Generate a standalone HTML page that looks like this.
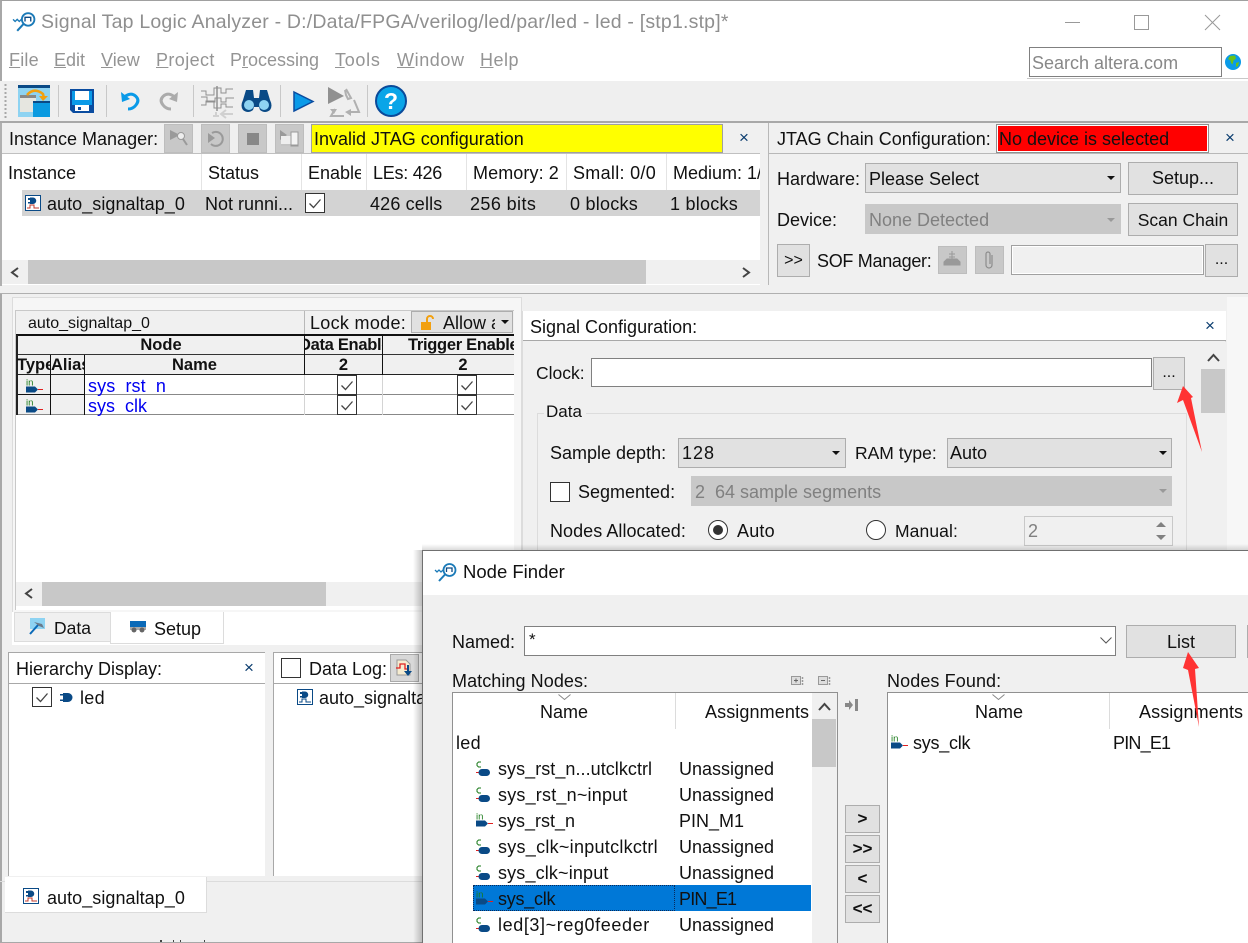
<!DOCTYPE html>
<html><head><meta charset="utf-8"><style>
html,body{margin:0;padding:0}
body{width:1248px;height:943px;overflow:hidden;position:relative;background:#f0f0f0;font:18px "Liberation Sans",sans-serif;color:#111}
.t{position:absolute;white-space:nowrap;line-height:22px;height:22px}
.b{position:absolute;box-sizing:border-box}
.btn{position:absolute;box-sizing:border-box;background:#e1e1e1;border:1px solid #adadad;text-align:center}
.cb{position:absolute;box-sizing:border-box;background:#e1e1e1;border:1px solid #adadad}
.dis{background:#c8c8c8;border-color:#c8c8c8}
.g{color:#808080}
.blu{color:#0000f0}
.bold{font-weight:bold;font-size:16.5px;text-align:center}
svg{position:absolute;overflow:visible}
.clip{overflow:hidden}
.h{color:transparent}
</style></head><body>
<svg width="0" height="0" style="position:absolute"><defs>
<symbol id="inst" viewBox="0 0 16 16"><rect x=".5" y=".5" width="15" height="15" fill="#fff" stroke="#0a4a86"/><path d="M3 3h2v-.5h3a3 3 0 0 1 0 6.500h-3v-.5h-2v-1.500h2v-2h-2z" fill="#0a4a86"/><path d="M2 13h3v-3h4v3h5" fill="none" stroke="#c0392b"/></symbol>
<symbol id="inst2" viewBox="0 0 16 16"><rect x=".5" y=".5" width="15" height="15" fill="#fff" stroke="#0a4a86"/><path d="M3 3h2v-.5h3a3 3 0 0 1 0 6.500h-3v-.5h-2v-1.500h2v-2h-2z" fill="#0a4a86"/><path d="M2 13h3v-3h4v3h5" fill="none" stroke="#0a4a86"/></symbol>
<symbol id="pin" viewBox="0 0 17 14"><text x="0" y="6.500" font-size="9.500" fill="#1a7a1a" font-family="Liberation Sans">in</text><path d="M0 7.500h9l3 3-3 3H0z" fill="#0a4a86"/><path d="M12 10.500h5" stroke="#e02020"/></symbol>
<symbol id="nod" viewBox="0 0 15 16"><path d="M5 1H2.500L1 2.500v2L2.500 6H5" fill="none" stroke="#1a7a1a"/><path d="M0 11.500h3" stroke="#e02020"/><rect x="2.500" y="8" width="11.500" height="7" rx="3.500" fill="#0a4a86"/></symbol>
<symbol id="chk" viewBox="0 0 20 20"><rect x=".5" y=".5" width="19" height="19" fill="#fff" stroke="#333"/><path d="M4.500 10.500l4 4 7-8" fill="none" stroke="#444" stroke-width="1.300"/></symbol>
<symbol id="logo" viewBox="0 0 24 22"><path d="M1 8l2 2 2-2 2 2 2-2 2 2" fill="none" stroke="#1a7ab8" stroke-width="1.300"/><circle cx="15.500" cy="8" r="6" fill="#fff" stroke="#1a7ab8" stroke-width="1.800"/><path d="M12.500 10V6h5.500v4" fill="none" stroke="#0a4a86" stroke-width="1.300"/><path d="M11 12.500L5 19" stroke="#1a7ab8" stroke-width="2"/></symbol>
</defs></svg>

<!-- main white top -->
<div class="b" style="left:0;top:0;width:1248px;height:81px;background:#fff;border-top:1px solid #a0a0a0;border-left:2px solid #a8a8a8"></div>
<svg style="left:12px;top:11px" width="25" height="23"><use href="#logo" width="25" height="23"/></svg>
<div class="t" style="left:41px;top:11px;font-size:19.5px;color:#8f8f8f;letter-spacing:.2px">Signal Tap Logic Analyzer - D:/Data/FPGA/verilog/led/par/led - led - [stp1.stp]*</div>
<div class="b" style="left:1065px;top:22px;width:15px;height:1px;background:#999"></div>
<div class="b" style="left:1134px;top:15px;width:15px;height:15px;border:1px solid #999"></div>
<svg style="left:1205px;top:15px" width="15" height="15"><path d="M0 0l15 15M15 0L0 15" stroke="#999" stroke-width="1"/></svg>
<div class="t g" style="left:9px;top:49px;color:#949494;letter-spacing:.2px"><u>F</u>ile</div>
<div class="t g" style="left:54px;top:49px;color:#949494"><u>E</u>dit</div>
<div class="t g" style="left:101px;top:49px;color:#949494"><u>V</u>iew</div>
<div class="t g" style="left:156px;top:49px;color:#949494;letter-spacing:.4px"><u>P</u>roject</div>
<div class="t g" style="left:230px;top:49px;color:#949494">P<u>r</u>ocessing</div>
<div class="t g" style="left:335px;top:49px;color:#949494;letter-spacing:.7px"><u>T</u>ools</div>
<div class="t g" style="left:397px;top:49px;color:#949494;letter-spacing:.6px"><u>W</u>indow</div>
<div class="t g" style="left:480px;top:49px;color:#949494;letter-spacing:.5px"><u>H</u>elp</div>
<div class="b" style="left:1029px;top:47px;width:193px;height:30px;border:1px solid #808080;background:#fff"></div>
<div class="t g" style="left:1032px;top:52px;font-size:18px;color:#888">Search altera.com</div>
<svg style="left:1225px;top:54px" width="16" height="16"><circle cx="8" cy="8" r="8" fill="#0a9be8"/><path d="M5 2l5-.5 1 3-2.500 2-1 4-1.500-1.500-.500-2.500L3 5zM11 9l3-1-1 4-2 1z" fill="#6ac21a"/></svg>
<div class="b" style="left:1027px;top:78px;width:221px;height:1px;background:#c8c8c8"></div>

<!-- toolbar -->
<div class="b" style="left:2px;top:81px;width:1246px;height:40px;background:#efefef"></div>
<div class="b" style="left:0;top:121px;width:1248px;height:2px;background:#a8a8a8"></div>
<svg style="left:4px;top:84px" width="4" height="34"><path d="M1.500 0v34" stroke="#a8a8a8" stroke-dasharray="2 2" stroke-width="2"/></svg>
<svg style="left:18px;top:85px" width="32" height="32" viewBox="0 0 32 32"><rect width="32" height="32" fill="#8ed3f2"/><rect width="32" height="3" fill="#0a4a86"/><rect x="2" y="10" width="16" height="17" fill="#e6e6e0"/><rect x="2" y="10" width="16" height="3" fill="#888"/><rect x="15" y="16" width="17" height="16" fill="#0a9ae0"/><rect x="15" y="16" width="17" height="2" fill="#0a4a86"/><path d="M9 10Q16 2 25 9l1 4" fill="none" stroke="#f2a010" stroke-width="2.500"/><path d="M21 11h9l-5 5z" fill="#f2a010"/></svg>
<div class="b" style="left:58px;top:85px;width:1px;height:32px;background:#c8c8c8"></div>
<svg style="left:70px;top:89px" width="24" height="24" viewBox="0 0 24 24"><path d="M0 0h24v24H3l-3-3z" fill="#0a4ca0"/><rect x="5" y="2" width="14" height="9" fill="#fff"/><rect x="2" y="2" width="3" height="14" fill="#0a9ae8"/><rect x="19" y="2" width="3" height="14" fill="#0a9ae8"/><rect x="2" y="11" width="20" height="5" fill="#0a9ae8"/><rect x="5" y="16" width="14" height="6" fill="#fff"/><rect x="8" y="18" width="3" height="3" fill="#0a4ca0"/></svg>
<div class="b" style="left:106px;top:85px;width:1px;height:32px;background:#c8c8c8"></div>
<svg style="left:120px;top:91px" width="20" height="20" viewBox="0 0 20 20"><path d="M5 5.500Q11 1 15.500 5T16 14Q13 18 8 18" fill="none" stroke="#0a9ae8" stroke-width="3"/><path d="M1 1l1 10 8-3z" fill="#0a9ae8"/></svg>
<svg style="left:159px;top:91px" width="20" height="20" viewBox="0 0 20 20"><path d="M15 5.500Q9 1 4.500 5T4 14Q7 18 12 18" fill="none" stroke="#ababab" stroke-width="3"/><path d="M19 1l-1 10-8-3z" fill="#ababab"/></svg>
<div class="b" style="left:193px;top:85px;width:1px;height:32px;background:#c8c8c8"></div>
<svg style="left:201px;top:86px" width="33" height="31" viewBox="0 0 33 31" fill="none" stroke="#909090"><path d="M0 5h5v4h8V2h7v5h5V3h7M0 11h6v5h8v-4h6v4h5v-4h8M0 19h5v-4h8v7h7v-4h5v3h7" /><path d="M16 0v25" stroke-width="1.500"/><path d="M12 30h6M15 26v5M21 28h11" stroke="#d0d0d0" stroke-width="2"/><path d="M25 24l-5 4 5 4" stroke="#d0d0d0" stroke-width="2"/></svg>
<svg style="left:241px;top:88px" width="31" height="25" viewBox="0 0 31 25"><path d="M2 12L5 2h7l1 8h5l1-8h7l3 10q3 6 0 10-5 4-10 0l-1-3h-5l-1 3q-5 4-10 0-3-4 0-10z" fill="#0a4a86"/><circle cx="8" cy="17" r="5" fill="#8ed3f2"/><circle cx="23" cy="17" r="5" fill="#8ed3f2"/></svg>
<div class="b" style="left:280px;top:85px;width:1px;height:32px;background:#c8c8c8"></div>
<svg style="left:293px;top:91px" width="21" height="21" viewBox="0 0 21 21"><path d="M1 1l19 9.500L1 20z" fill="#0a9ae8" stroke="#0a4ca0" stroke-width="1.500"/></svg>
<svg style="left:327px;top:86px" width="33" height="31" viewBox="0 0 33 31"><path d="M1 1l16 9L1 18z" fill="#909090"/><path d="M19 3l5 9-3 1-2-4-1-5M27 14l5 12H20M17 30h-13l4-7" fill="none" stroke="#b0b0b0" stroke-width="2"/><path d="M18 26l6-3v7z" fill="#b0b0b0"/><path d="M3 23h7l-3 5z" fill="#b0b0b0"/></svg>
<div class="b" style="left:367px;top:85px;width:1px;height:32px;background:#c8c8c8"></div>
<svg style="left:375px;top:85px" width="32" height="32" viewBox="0 0 32 32"><circle cx="16" cy="16" r="15" fill="#0aa5e8" stroke="#0a4a9a" stroke-width="2"/><text x="16" y="24" text-anchor="middle" font-size="23" font-weight="bold" fill="#fff" font-family="Liberation Sans">?</text></svg>

<!-- Instance manager -->
<div class="b" style="left:0;top:123px;width:2px;height:163px;background:#b0b0b0"></div>
<div class="b" style="left:2px;top:153px;width:758px;height:132px;background:#fff;border-top:1px solid #c0c0c0"></div>
<div class="t" style="left:9px;top:128px">Instance Manager:</div>
<div class="btn dis" style="left:164px;top:124px;width:29px;height:29px;background:#c8c8c8;border-color:#bdbdbd"></div>
<div class="btn dis" style="left:201px;top:124px;width:29px;height:29px;background:#c8c8c8;border-color:#bdbdbd"></div>
<div class="btn dis" style="left:238px;top:124px;width:29px;height:29px;background:#c8c8c8;border-color:#bdbdbd"></div>
<div class="btn dis" style="left:275px;top:124px;width:29px;height:29px;background:#c8c8c8;border-color:#bdbdbd"></div>
<svg style="left:169px;top:129px" width="20" height="20"><path d="M1 1l10 5-10 5z" fill="#9a9a9a"/><circle cx="12" cy="7" r="3.500" fill="#eee" stroke="#9a9a9a"/><path d="M14 10l4 6" stroke="#9a9a9a" stroke-width="2"/></svg>
<svg style="left:207px;top:130px" width="18" height="18"><path d="M5 3a7 7 0 1 1-1 11" fill="none" stroke="#9a9a9a" stroke-width="2"/><path d="M1 3l7 5-7 5z" fill="#9a9a9a"/></svg>
<div class="b" style="left:247px;top:133px;width:12px;height:12px;background:#888"></div>
<svg style="left:280px;top:130px" width="20" height="18"><path d="M0 0l7 5-7 5z" fill="#9a9a9a"/><rect x="1" y="6" width="17" height="10" fill="#eee"/><path d="M11 2h7v14h-7zM1 15h17" fill="#f4f4f4" stroke="#9a9a9a"/></svg>
<div class="b" style="left:311px;top:124px;width:412px;height:29px;background:#ffff00;border:1px solid #a0a0a0"></div>
<div class="t" style="left:314px;top:128px">Invalid JTAG configuration</div>
<div class="t" style="left:739px;top:127px;color:#0a3c6e;font-size:17px">×</div>

<div class="t" style="left:8px;top:162px">Instance</div>
<div class="b" style="left:201px;top:154px;width:1px;height:36px;background:#e4e4e4"></div>
<div class="t" style="left:208px;top:162px">Status</div>
<div class="b" style="left:301px;top:154px;width:1px;height:36px;background:#e4e4e4"></div>
<div class="t clip" style="left:308px;top:162px;width:53px">Enable</div>
<div class="b" style="left:366px;top:154px;width:1px;height:36px;background:#e4e4e4"></div>
<div class="t" style="left:373px;top:162px;letter-spacing:-.25px">LEs: 426</div>
<div class="b" style="left:466px;top:154px;width:1px;height:36px;background:#e4e4e4"></div>
<div class="t" style="left:473px;top:162px;letter-spacing:.1px">Memory: 2</div>
<div class="b" style="left:566px;top:154px;width:1px;height:36px;background:#e4e4e4"></div>
<div class="t" style="left:573px;top:162px;letter-spacing:.3px">Small: 0/0</div>
<div class="b" style="left:666px;top:154px;width:1px;height:36px;background:#e4e4e4"></div>
<div class="t clip" style="left:673px;top:162px;width:87px">Medium: 1/1</div>
<div class="b" style="left:22px;top:190px;width:738px;height:26px;background:#d3d3d3"></div>
<svg style="left:25px;top:195px" width="16" height="16"><use href="#inst" width="16" height="16"/></svg>
<div class="t" style="left:47px;top:193px;letter-spacing:.05px">auto_signaltap_0</div>
<div class="t" style="left:205px;top:193px">Not runni...</div>
<svg style="left:305px;top:193px" width="20" height="20"><use href="#chk" width="20" height="20"/></svg>
<div class="t" style="left:370px;top:193px;letter-spacing:.15px">426 cells</div>
<div class="t" style="left:470px;top:193px;letter-spacing:.4px">256 bits</div>
<div class="t" style="left:570px;top:193px;letter-spacing:.25px">0 blocks</div>
<div class="t" style="left:670px;top:193px;letter-spacing:.25px">1 blocks</div>
<div class="b" style="left:2px;top:260px;width:758px;height:24px;background:#f0f0f0"></div>
<div class="b" style="left:28px;top:260px;width:618px;height:24px;background:#c8c8c8"></div>
<svg style="left:10px;top:267px" width="10" height="11"><path d="M8 1L2 5.500 8 10" fill="none" stroke="#444" stroke-width="2"/></svg>
<svg style="left:741px;top:267px" width="10" height="11"><path d="M2 1l6 4.500L2 10" fill="none" stroke="#444" stroke-width="2"/></svg>

<!-- JTAG -->
<div class="b" style="left:768px;top:123px;width:1px;height:162px;background:#b8b8b8"></div>
<div class="b" style="left:768px;top:153px;width:480px;height:1px;background:#b8b8b8"></div>
<div class="t" style="left:777px;top:128px">JTAG Chain Configuration:</div>
<div class="b" style="left:996px;top:124px;width:213px;height:29px;background:#ff0000;border:1px solid #fff;outline:1px solid #909090;outline-offset:-1px;box-shadow:inset 0 0 0 1px #fff"></div>
<div class="t" style="left:999px;top:128px">No device is selected</div>
<div class="t" style="left:1225px;top:127px;color:#0a3c6e;font-size:17px">×</div>
<div class="t" style="left:777px;top:168px">Hardware:</div>
<div class="cb" style="left:865px;top:163px;width:256px;height:30px"></div>
<div class="t" style="left:869px;top:168px">Please Select</div>
<svg style="left:1107px;top:176px" width="9" height="5"><path d="M0 0h8L4 4z" fill="#111"/></svg>
<div class="btn" style="left:1128px;top:162px;width:110px;height:33px;line-height:31px">Setup...</div>
<div class="t" style="left:777px;top:209px">Device:</div>
<div class="cb dis" style="left:865px;top:204px;width:256px;height:30px"></div>
<div class="t" style="left:869px;top:209px;color:#808080">None Detected</div>
<svg style="left:1107px;top:218px" width="9" height="5"><path d="M0 0h8L4 4z" fill="#999"/></svg>
<div class="btn" style="left:1128px;top:203px;width:110px;height:33px;line-height:32px;font-size:17.500px">Scan Chain</div>
<div class="btn" style="left:777px;top:244px;width:33px;height:33px;line-height:32px;font-size:16px">&gt;&gt;</div>
<div class="t" style="left:817px;top:250px;letter-spacing:-.3px">SOF Manager:</div>
<div class="btn" style="left:938px;top:246px;width:29px;height:28px;background:#c8c8c8;border-color:#bdbdbd"></div>
<svg style="left:942px;top:250px" width="20" height="20"><path d="M10 1v8M7 4h6M7 7h6M2 12l3-3h10l3 3v3H2z" stroke="#999" fill="#999"/></svg>
<div class="btn" style="left:975px;top:246px;width:29px;height:28px;background:#c8c8c8;border-color:#bdbdbd"></div>
<svg style="left:983px;top:250px" width="13" height="20"><path d="M9 5v10a3 3 0 0 1-6 0V4a2 2 0 0 1 4 0v10" fill="none" stroke="#8c8c8c" stroke-width="1.200"/></svg>
<div class="b" style="left:1011px;top:245px;width:193px;height:30px;background:#f0f0f0;border:1px solid #a0a0a0;box-shadow:inset 0 0 0 1px #fff"></div>
<div class="btn" style="left:1205px;top:244px;width:33px;height:33px;line-height:30px;font-size:16px">...</div>

<!-- divider line -->
<div class="b" style="left:0;top:293px;width:1248px;height:1px;background:#b0b0b0"></div>
<div class="b" style="left:0;top:294px;width:2px;height:649px;background:#a8a8a8"></div>
<div class="b" style="left:1227px;top:297px;width:21px;height:253px;background:#f7f7f7"></div>

<!-- left node table panel -->
<div class="b" style="left:12px;top:297px;width:510px;height:316px;border:1px solid #dcdcdc;background:#f6f6f6"></div>
<div class="b" style="left:15px;top:310px;width:499px;height:300px;background:#fff;border:1px solid #c8c8c8;border-bottom:0;border-right:0"></div>
<div class="b" style="left:16px;top:311px;width:498px;height:24px;background:#f0f0f0"></div>
<div class="t" style="left:28px;top:313px;font-size:16px">auto_signaltap_0</div>
<div class="b" style="left:304px;top:311px;width:1px;height:24px;background:#b8b8b8"></div>
<div class="t" style="left:310px;top:312px;letter-spacing:.3px">Lock mode:</div>
<div class="cb" style="left:411px;top:311px;width:102px;height:22px;background:#e1e1e1"></div>
<svg style="left:420px;top:315px" width="16" height="16"><path d="M7 7V4a3 3 0 0 1 6 0" fill="none" stroke="#f2a010" stroke-width="2"/><rect x="1" y="7" width="10" height="8" fill="#f2a010"/></svg>
<div class="t clip" style="left:443px;top:312px;width:52px">Allow all</div>
<svg style="left:501px;top:320px" width="9" height="5"><path d="M0 0h8L4 4z" fill="#111"/></svg>
<!-- table -->
<div class="b" style="left:16px;top:335px;width:498px;height:40px;background:#f0f0f0"></div>
<div class="b" style="left:16px;top:334px;width:498px;height:2px;background:#111"></div>
<div class="b" style="left:16px;top:354px;width:498px;height:1px;background:#333"></div>
<div class="b" style="left:16px;top:374px;width:498px;height:1px;background:#222"></div>
<div class="b" style="left:16px;top:394px;width:498px;height:1px;background:#888"></div>
<div class="b" style="left:16px;top:414px;width:498px;height:1px;background:#888"></div>
<div class="b" style="left:16px;top:335px;width:2px;height:80px;background:#222"></div>
<div class="b" style="left:50px;top:355px;width:1px;height:60px;background:#111"></div>
<div class="b" style="left:84px;top:355px;width:1px;height:60px;background:#111"></div>
<div class="b" style="left:18px;top:375px;width:66px;height:39px;background:#f0f0f0"></div>
<div class="b" style="left:50px;top:375px;width:1px;height:39px;background:#111"></div>
<div class="b" style="left:84px;top:375px;width:1px;height:40px;background:#111"></div>
<div class="b" style="left:18px;top:394px;width:66px;height:1px;background:#111"></div>
<div class="b" style="left:304px;top:335px;width:1px;height:40px;background:#111"></div>
<div class="b" style="left:382px;top:335px;width:1px;height:40px;background:#111"></div>
<div class="b" style="left:304px;top:375px;width:1px;height:40px;background:#d4d4d4"></div>
<div class="b" style="left:382px;top:375px;width:1px;height:40px;background:#d4d4d4"></div>
<div class="t bold" style="left:18px;top:335px;width:286px;line-height:21px">Node</div>
<div class="t bold clip" style="left:305px;top:335px;width:77px;line-height:21px"><span style="position:absolute;left:-6px;white-space:nowrap;letter-spacing:-.3px">Data Enable</span></div>
<div class="t bold clip" style="left:383px;top:335px;width:131px;line-height:21px;text-align:left"><span style="position:absolute;left:25px;white-space:nowrap;letter-spacing:-.3px">Trigger Enable</span></div>
<div class="t bold clip" style="left:17px;top:355px;width:33px;line-height:21px;text-align:left">Type</div>
<div class="t bold clip" style="left:51px;top:355px;width:33px;line-height:21px;text-align:left">Alias</div>
<div class="t bold" style="left:85px;top:355px;width:219px;line-height:21px">Name</div>
<div class="t bold" style="left:305px;top:355px;width:77px;line-height:21px">2</div>
<div class="t bold" style="left:383px;top:355px;width:160px;line-height:21px">2</div>
<svg style="left:26px;top:379px" width="17" height="14"><use href="#pin" width="17" height="14"/></svg>
<svg style="left:26px;top:399px" width="17" height="14"><use href="#pin" width="17" height="14"/></svg>
<div class="t blu" style="left:88px;top:375px;letter-spacing:.1px">sys<span class="h">_</span>rst<span class="h">_</span>n</div>
<div class="t blu" style="left:88px;top:395px">sys<span class="h">_</span>clk</div>
<svg style="left:337px;top:375px" width="20" height="20"><use href="#chk" width="20" height="20"/></svg>
<svg style="left:337px;top:395px" width="20" height="20"><use href="#chk" width="20" height="20"/></svg>
<svg style="left:457px;top:375px" width="20" height="20"><use href="#chk" width="20" height="20"/></svg>
<svg style="left:457px;top:395px" width="20" height="20"><use href="#chk" width="20" height="20"/></svg>
<!-- scrollbar -->
<div class="b" style="left:16px;top:582px;width:406px;height:24px;background:#f0f0f0"></div>
<div class="b" style="left:42px;top:582px;width:284px;height:24px;background:#c8c8c8"></div>
<svg style="left:24px;top:588px" width="10" height="11"><path d="M8 1L2 5.500 8 10" fill="none" stroke="#444" stroke-width="2"/></svg>

<!-- tabs -->
<div class="b" style="left:12px;top:612px;width:410px;height:33px;background:#fff"></div>
<div class="b" style="left:14px;top:612px;width:97px;height:30px;background:#f0f0f0;border:1px solid #dcdcdc"></div>
<div class="b" style="left:110px;top:612px;width:114px;height:32px;background:#fff;border:1px solid #dcdcdc;border-top:0"></div>
<svg style="left:29px;top:618px" width="17" height="17"><rect x="1" y="0" width="15" height="11" fill="#8ed3f2"/><path d="M1 16L9 7" stroke="#0a6ab8" stroke-width="2"/><path d="M5 4l8 2 2 4-5-2z" fill="#6a7a8a"/></svg>
<div class="t" style="left:54px;top:617px;font-size:17.500px">Data</div>
<svg style="left:130px;top:621px" width="16" height="12"><rect width="16" height="6" fill="#0a6ab8"/><rect y="6" width="16" height="3" fill="#aaa"/><circle cx="4" cy="9" r="2.500" fill="#666"/><circle cx="12" cy="9" r="2.500" fill="#666"/></svg>
<div class="t" style="left:154px;top:618px;font-size:18px">Setup</div>

<!-- hierarchy -->
<div class="b" style="left:8px;top:652px;width:257px;height:224px;background:#fff;border-top:1px solid #a8a8a8;border-left:1px solid #a8a8a8"></div>
<div class="b" style="left:9px;top:683px;width:256px;height:1px;background:#a8a8a8"></div>
<div class="t" style="left:16px;top:658px">Hierarchy Display:</div>
<div class="t" style="left:244px;top:657px;color:#0a3c6e;font-size:17px">×</div>
<svg style="left:32px;top:687px" width="20" height="20"><use href="#chk" width="20" height="20"/></svg>
<svg style="left:60px;top:693px" width="12" height="9"><path d="M0 1h3v-1h5a4.500 4.500 0 0 1 0 9H3V8H0V6.500h3v-4H0z" fill="#0a4a86"/></svg>
<div class="t" style="left:80px;top:687px;letter-spacing:.3px">led</div>

<div class="b" style="left:273px;top:652px;width:149px;height:224px;background:#fff;border-top:1px solid #a8a8a8;border-left:1px solid #a8a8a8"></div>
<div class="b" style="left:274px;top:683px;width:148px;height:1px;background:#a8a8a8"></div>
<div class="b" style="left:281px;top:658px;width:20px;height:20px;background:#fff;border:1px solid #333"></div>
<div class="t" style="left:309px;top:658px">Data Log:</div>
<div class="btn" style="left:390px;top:654px;width:29px;height:28px;background:#d8d8d8;border-color:#aaa"></div>
<svg style="left:396px;top:659px" width="17" height="18"><path d="M1 1h9l4 4v11H1z" fill="#f6ecd0" stroke="#999"/><path d="M0 9h4V5h5v5h4" fill="none" stroke="#e02020" stroke-width="1.300"/><path d="M11 6h2v6h3l-4 5-4-5h3z" fill="#0a4a86"/></svg>
<svg style="left:297px;top:689px" width="16" height="16"><use href="#inst2" width="16" height="16"/></svg>
<div class="t clip" style="left:319px;top:687px;width:103px">auto_signaltap_0</div>

<!-- bottom tab -->
<div class="b" style="left:0;top:881px;width:422px;height:1px;background:#dcdcdc"></div>
<div class="b" style="left:5px;top:877px;width:202px;height:36px;background:#fff;border-right:1px solid #dcdcdc;border-bottom:1px solid #dcdcdc"></div>
<svg style="left:23px;top:888px" width="16" height="16"><use href="#inst" width="16" height="16"/></svg>
<div class="t" style="left:47px;top:887px;letter-spacing:.05px">auto_signaltap_0</div>
<div class="b" style="left:0;top:942px;width:422px;height:1px;background:#a8a8a8"></div>
<div class="b" style="left:160px;top:940px;width:2px;height:2px;background:#444"></div>
<div class="b" style="left:173px;top:940px;width:1px;height:2px;background:#444"></div>
<div class="b" style="left:180px;top:940px;width:1px;height:2px;background:#444"></div>
<div class="b" style="left:204px;top:940px;width:1px;height:2px;background:#444"></div>

<!-- signal config -->
<div class="b" style="left:522px;top:311px;width:704px;height:239px;background:#f0f0f0;border:1px solid #dcdcdc;border-bottom:0"></div>
<div class="b" style="left:523px;top:311px;width:703px;height:30px;background:#fff;border-bottom:1px solid #a8a8a8"></div>
<div class="t" style="left:530px;top:316px;font-size:18px">Signal Configuration:</div>
<div class="t" style="left:1205px;top:315px;color:#0a3c6e;font-size:17px">×</div>
<div class="t" style="left:536px;top:362px;font-size:17.500px">Clock:</div>
<div class="b" style="left:591px;top:358px;width:561px;height:29px;background:#fff;border:1px solid #808080"></div>
<div class="btn" style="left:1153px;top:357px;width:32px;height:33px;line-height:30px;font-size:16px">...</div>
<div class="b" style="left:537px;top:413px;width:650px;height:140px;border:1px solid #dcdcdc"></div>
<div class="b" style="left:544px;top:404px;width:42px;height:20px;background:#f0f0f0"></div>
<div class="t" style="left:546px;top:401px;font-size:17px">Data</div>
<div class="b" style="left:1201px;top:342px;width:25px;height:208px;background:#f0f0f0"></div>
<div class="b" style="left:1201px;top:369px;width:24px;height:44px;background:#c8c8c8"></div>
<svg style="left:1207px;top:353px" width="13" height="9"><path d="M1 8l5.500-6L12 8" fill="none" stroke="#444" stroke-width="2"/></svg>
<div class="t" style="left:550px;top:442px;font-size:18px">Sample depth:</div>
<div class="cb" style="left:678px;top:438px;width:168px;height:30px"></div>
<div class="t" style="left:682px;top:442px;letter-spacing:1px">128</div>
<svg style="left:832px;top:451px" width="9" height="5"><path d="M0 0h8L4 4z" fill="#111"/></svg>
<div class="t" style="left:855px;top:442px;font-size:17.500px">RAM type:</div>
<div class="cb" style="left:947px;top:438px;width:225px;height:30px"></div>
<div class="t" style="left:950px;top:442px">Auto</div>
<svg style="left:1159px;top:451px" width="9" height="5"><path d="M0 0h8L4 4z" fill="#111"/></svg>
<div class="b" style="left:550px;top:482px;width:20px;height:20px;background:#fff;border:1px solid #333"></div>
<div class="t" style="left:578px;top:481px;font-size:18px">Segmented:</div>
<div class="cb dis" style="left:691px;top:476px;width:481px;height:30px"></div>
<div class="t" style="left:695px;top:481px;color:#808080;font-size:18px">2&nbsp; 64 sample segments</div>
<svg style="left:1159px;top:489px" width="9" height="5"><path d="M0 0h8L4 4z" fill="#999"/></svg>
<div class="t" style="left:550px;top:520px;font-size:18px;letter-spacing:.05px">Nodes Allocated:</div>
<svg style="left:708px;top:520px" width="20" height="20"><circle cx="10" cy="10" r="9.500" fill="#fff" stroke="#333"/><circle cx="10" cy="10" r="5" fill="#333"/></svg>
<div class="t" style="left:737px;top:520px;font-size:18px;letter-spacing:.2px">Auto</div>
<svg style="left:866px;top:520px" width="20" height="20"><circle cx="10" cy="10" r="9.500" fill="#fff" stroke="#333"/></svg>
<div class="t" style="left:895px;top:520px;font-size:17.500px;letter-spacing:.1px">Manual:</div>
<div class="b" style="left:1024px;top:516px;width:149px;height:30px;border:1px solid #c8c8c8"></div>
<div class="t" style="left:1028px;top:520px;color:#808080">2</div>
<svg style="left:1153px;top:517px" width="16" height="28"><rect width="16" height="28" fill="#f0f0f0"/><path d="M3 10l5-5 5 5z" fill="#808080"/><path d="M3 18h10l-5 5z" fill="#808080"/></svg>

<!-- dialog shadow -->
<div class="b" style="left:413px;top:550px;width:9px;height:393px;background:linear-gradient(to right,rgba(0,0,0,0),rgba(0,0,0,.22))"></div>
<div class="b" style="left:422px;top:544px;width:826px;height:6px;background:linear-gradient(to bottom,rgba(0,0,0,0),rgba(0,0,0,.14))"></div>

<!-- Node finder -->
<div class="b" style="left:422px;top:550px;width:826px;height:393px;background:#f0f0f0;border-left:1px solid #707070;border-top:1px solid #707070"></div>
<div class="b" style="left:423px;top:551px;width:825px;height:44px;background:#fff"></div>
<svg style="left:434px;top:562px" width="24" height="22"><use href="#logo" width="24" height="22"/></svg>
<div class="t" style="left:463px;top:561px;font-size:18.500px">Node Finder</div>
<div class="t" style="left:452px;top:631px">Named:</div>
<div class="b" style="left:524px;top:626px;width:592px;height:30px;background:#fff;border:1px solid #808080"></div>
<div class="t" style="left:529px;top:629px;font-size:17px">*</div>
<svg style="left:1100px;top:637px" width="12" height="7"><path d="M.5.500l5.500 5.500 5.500-5.500" fill="none" stroke="#555"/></svg>
<div class="btn" style="left:1126px;top:625px;width:110px;height:33px;line-height:32px">List</div>
<div class="b" style="left:1247px;top:625px;width:1px;height:33px;background:#adadad"></div>
<div class="t" style="left:452px;top:670px;letter-spacing:.07px">Matching Nodes:</div>
<svg style="left:791px;top:676px" width="13" height="10"><rect x=".5" y=".5" width="9" height="8" fill="#ddd" stroke="#999"/><path d="M3 4.500h4M5 2.500v4" stroke="#666"/><path d="M11.500 1v8" stroke="#999" stroke-dasharray="2 1" stroke-width="1.500"/></svg>
<svg style="left:818px;top:676px" width="13" height="10"><rect x=".5" y=".5" width="9" height="8" fill="#ddd" stroke="#999"/><path d="M3 4.500h4" stroke="#666"/><path d="M11.500 1v8" stroke="#999" stroke-dasharray="2 1" stroke-width="1.500"/></svg>
<div class="b" style="left:452px;top:692px;width:386px;height:251px;background:#fff;border:1px solid #909090;border-bottom:0"></div>
<svg style="left:558px;top:694px" width="13" height="6"><path d="M.5.500L6.500 5.500 12.500.5" fill="none" stroke="#888"/></svg>
<div class="t" style="left:540px;top:701px">Name</div>
<div class="b" style="left:675px;top:693px;width:1px;height:36px;background:#dcdcdc"></div>
<div class="t" style="left:705px;top:701px;letter-spacing:.1px">Assignments</div>
<div class="b" style="left:812px;top:693px;width:25px;height:250px;background:#f0f0f0"></div>
<div class="b" style="left:812px;top:719px;width:24px;height:48px;background:#c8c8c8"></div>
<svg style="left:818px;top:702px" width="13" height="9"><path d="M1 8l5.500-6L12 8" fill="none" stroke="#444" stroke-width="2"/></svg>
<div class="b" style="left:473px;top:885px;width:338px;height:26px;background:#0078d7"></div>
<div class="b" style="left:473px;top:885px;width:202px;height:26px;border:1px dotted #0a2a5a"></div>
<div class="t" style="left:456px;top:732px;letter-spacing:.3px">led</div>
<svg style="left:476px;top:761px" width="15" height="16"><use href="#nod" width="15" height="16"/></svg>
<svg style="left:476px;top:787px" width="15" height="16"><use href="#nod" width="15" height="16"/></svg>
<svg style="left:476px;top:813px" width="17" height="14"><use href="#pin" width="17" height="14"/></svg>
<svg style="left:476px;top:839px" width="15" height="16"><use href="#nod" width="15" height="16"/></svg>
<svg style="left:476px;top:865px" width="15" height="16"><use href="#nod" width="15" height="16"/></svg>
<svg style="left:476px;top:891px" width="17" height="14"><use href="#pin" width="17" height="14"/></svg>
<svg style="left:476px;top:917px" width="15" height="16"><use href="#nod" width="15" height="16"/></svg>
<div class="t" style="left:498px;top:758px;letter-spacing:.05px">sys_rst_n...utclkctrl</div><div class="t" style="left:679px;top:758px">Unassigned</div>
<div class="t" style="left:498px;top:784px;letter-spacing:.2px">sys_rst_n~input</div><div class="t" style="left:679px;top:784px">Unassigned</div>
<div class="t" style="left:498px;top:810px">sys_rst_n</div><div class="t" style="left:679px;top:810px">PIN_M1</div>
<div class="t" style="left:498px;top:836px;letter-spacing:.27px">sys_clk~inputclkctrl</div><div class="t" style="left:679px;top:836px">Unassigned</div>
<div class="t" style="left:498px;top:862px;letter-spacing:.15px">sys_clk~input</div><div class="t" style="left:679px;top:862px">Unassigned</div>
<div class="t" style="left:498px;top:888px;letter-spacing:-.25px">sys_clk</div><div class="t" style="left:679px;top:888px;letter-spacing:-.8px">PIN_E1</div>
<div class="t" style="left:498px;top:914px;letter-spacing:.6px">led[3]~reg0feeder</div><div class="t" style="left:679px;top:914px">Unassigned</div>

<svg style="left:845px;top:699px" width="14" height="12"><path d="M0 4h4V1l4 5-4 5V8H0z" fill="#888"/><rect x="10" y="0" width="3" height="12" fill="#888"/></svg>
<div class="btn" style="left:845px;top:805px;width:35px;height:28px;font-weight:bold;line-height:26px;font-size:17px">&gt;</div>
<div class="btn" style="left:845px;top:835px;width:35px;height:28px;font-weight:bold;line-height:26px;font-size:17px">&gt;&gt;</div>
<div class="btn" style="left:845px;top:865px;width:35px;height:28px;font-weight:bold;line-height:26px;font-size:17px">&lt;</div>
<div class="btn" style="left:845px;top:895px;width:35px;height:28px;font-weight:bold;line-height:26px;font-size:17px">&lt;&lt;</div>

<div class="t" style="left:887px;top:670px;letter-spacing:.1px">Nodes Found:</div>
<div class="b" style="left:887px;top:692px;width:361px;height:251px;background:#fff;border:1px solid #909090;border-bottom:0;border-right:0"></div>
<svg style="left:992px;top:694px" width="13" height="6"><path d="M.5.500L6.500 5.500 12.500.5" fill="none" stroke="#888"/></svg>
<div class="t" style="left:975px;top:701px">Name</div>
<div class="b" style="left:1109px;top:693px;width:1px;height:36px;background:#dcdcdc"></div>
<div class="t" style="left:1139px;top:701px;letter-spacing:.1px">Assignments</div>
<svg style="left:891px;top:735px" width="17" height="14"><use href="#pin" width="17" height="14"/></svg>
<div class="t" style="left:913px;top:732px;letter-spacing:-.25px">sys_clk</div>
<div class="t" style="left:1113px;top:732px;letter-spacing:-.8px">PIN_E1</div>

<!-- red arrows -->
<svg style="left:0;top:0" width="1248" height="943"><path d="M1183 386L1177 403 1183 400 1202 452 1191 398 1193 397z" fill="#ff3333"/><path d="M1188 652L1183 668 1188 670 1199 727 1195 669 1199 668z" fill="#ff3333"/></svg>
</body></html>
